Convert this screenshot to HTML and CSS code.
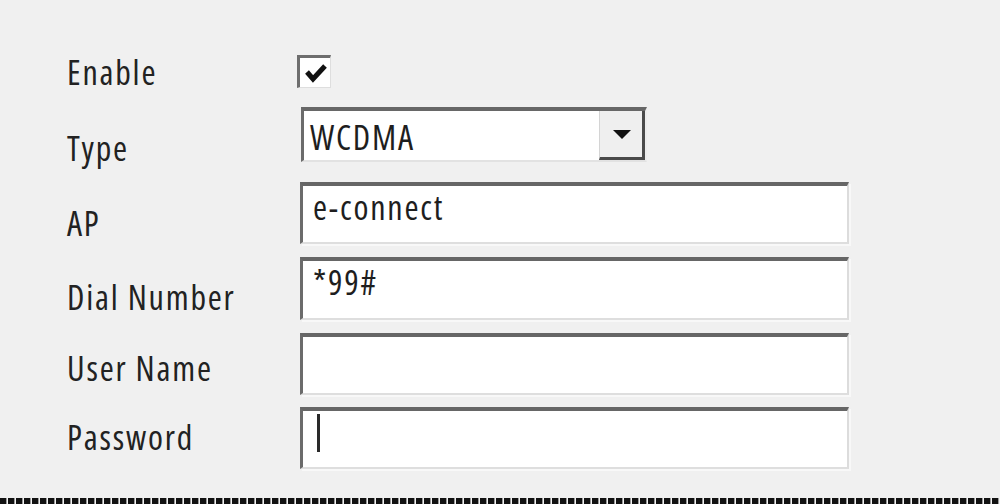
FILE: index.html
```html
<!DOCTYPE html>
<html lang="en">
<head>
<meta charset="utf-8">
<title>WCDMA settings</title>
<link rel="stylesheet" href="styles.css">
</head>
<body>
<div class="page">
  <div class="form">
    <div class="row row-enable">
      <div class="label pad-enable">Enable</div>
      <div class="checkbox">
        <svg class="check" viewBox="0 0 29 29" width="29" height="29" aria-hidden="true">
          <polyline points="6,14 12,21 24,8" fill="none" stroke="#111" stroke-width="5"/>
        </svg>
      </div>
    </div>
    <div class="row row-type">
      <div class="label pad-type">Type</div>
      <div class="select">
        <span class="value">WCDMA</span>
        <span class="drop"><span class="arrow"></span></span>
      </div>
    </div>
    <div class="row row-ap">
      <div class="label pad-ap">AP</div>
      <div class="field"><span class="value">e-connect</span></div>
    </div>
    <div class="row row-dial">
      <div class="label pad-dial">Dial Number</div>
      <div class="field"><span class="value">*99#</span></div>
    </div>
    <div class="row row-user">
      <div class="label pad-user">User Name</div>
      <div class="field"><span class="value"></span></div>
    </div>
    <div class="row row-pass">
      <div class="label pad-pass">Password</div>
      <div class="field"><span class="caret"></span></div>
    </div>
  </div>
  <div class="rule"></div>
</div>
</body>
</html>
```
FILE: styles.css
```css
html, body {
  margin: 0;
  padding: 0;
  background: #f0f0f0;
}

.page {
  width: 1000px;
  height: 504px;
  display: flex;
  flex-direction: column;
  overflow: hidden;
  font-family: "Open Sans", "Liberation Sans", sans-serif;
  font-stretch: condensed;
  color: #222;
}

.form {
  padding: 55px 0 0 67px;
  display: flex;
  flex-direction: column;
}

.row {
  display: flex;
  align-items: flex-start;
}

.row-type { margin-top: 19px; }
.row-ap { margin-top: 20px; }
.row-dial { margin-top: 13px; }
.row-user { margin-top: 13px; }
.row-pass { margin-top: 12px; }

.label {
  width: 233px;
  font-size: 34px;
  line-height: 24px;
  letter-spacing: 1.8px;
  flex: none;
}

.pad-enable { padding-top: 5px; }
.pad-type { padding-top: 29px; }
.pad-ap { padding-top: 29px; }
.pad-dial { padding-top: 28px; }
.pad-user { padding-top: 23px; }
.pad-pass { padding-top: 18px; }

.checkbox {
  box-sizing: border-box;
  width: 34px;
  height: 33px;
  margin-left: -3px;
  background: #fff;
  border-top: 3px solid #6e6e6e;
  border-left: 3px solid #6e6e6e;
  border-right: 1px solid #dedede;
  border-bottom: 1px solid #dedede;
  display: flex;
  align-items: center;
  justify-content: center;
}

.check { display: block; }

.select {
  box-sizing: border-box;
  width: 346px;
  height: 55px;
  margin-left: 1px;
  background: #fff;
  border-top: 4px solid #676767;
  border-left: 3px solid #6b6b6b;
  border-right: 2px solid #ececec;
  border-bottom: 2px solid #e2e2e2;
  display: flex;
  align-items: stretch;
}

.select .value {
  flex: 1;
  padding: 9px 0 0 6px;
  font-size: 34px;
  line-height: 34px;
  letter-spacing: 1.8px;
  color: #1e1e1e;
}

.drop {
  box-sizing: border-box;
  width: 46px;
  background: #efefef;
  border-left: 1px solid #d4d4d4;
  border-right: 3px solid #4a4a4a;
  border-bottom: 3px solid #4a4a4a;
  display: flex;
  align-items: center;
  justify-content: center;
}

.arrow {
  width: 0;
  height: 0;
  border-left: 9px solid transparent;
  border-right: 9px solid transparent;
  border-top: 9px solid #111;
  margin-left: 1px;
}

.field {
  box-sizing: border-box;
  width: 549px;
  height: 62px;
  background: #fff;
  border-top: 4px solid #666;
  border-left: 3px solid #6b6b6b;
  border-right: 2px solid #dcdcdc;
  border-bottom: 2px solid #dedede;
  box-shadow: 2px 2px 0 #f8f8f8;
  display: flex;
  align-items: flex-start;
  padding: 4px 0 0 10px;
}

.row-dial .field { height: 63px; }

.field .value {
  font-size: 34px;
  line-height: 34px;
  letter-spacing: 1.8px;
  color: #1e1e1e;
}

.caret {
  width: 3px;
  height: 38px;
  background: #2a2a2a;
  margin-left: 4px;
  margin-top: -1px;
}

.rule {
  margin-top: 29px;
  height: 6px;
  background: repeating-linear-gradient(90deg, #111 0 6px, #9a9a9a 6px 7px, #f0f0f0 7px 8px);
}
```
